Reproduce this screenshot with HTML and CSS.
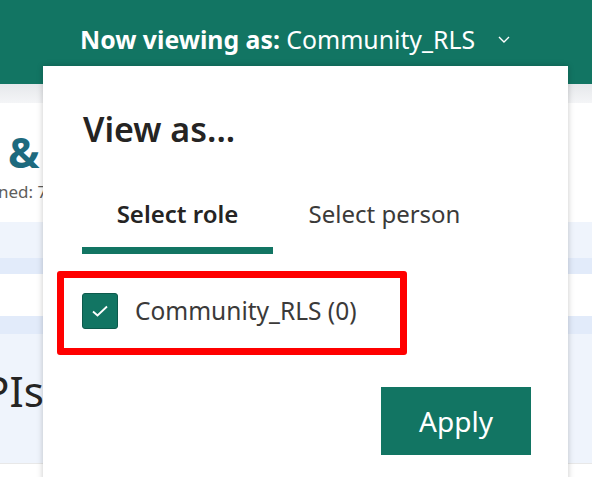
FILE: index.html
```html
<!DOCTYPE html>
<html>
<head>
<meta charset="utf-8">
<link rel="stylesheet" href="styles.css">
</head>
<body>
<div class="page">
  <header class="topbar">
    <span class="viewing"><b>Now viewing as:</b> Community_RLS</span>
    <svg class="chev" width="14" height="10" viewBox="0 0 14 10"><path d="M2 3 L7 8 L12 3" fill="none" stroke="#ffffff" stroke-width="1.4"/></svg>
  </header>
  <div class="subbar"></div>
  <section class="intro">
    <div class="title">&amp;</div>
    <div class="meta">ned: 7</div>
  </section>
  <div class="band light h36"></div>
  <div class="band dark h16"></div>
  <div class="band white h42"></div>
  <div class="band dark h18"></div>
  <section class="band light kpi">
    <div class="kpi-title">KPIs</div>
  </section>
</div>

<div class="panel">
  <h1 class="panel-title">View as...</h1>
  <div class="tabs">
    <div class="tab active">Select role</div>
    <div class="tab">Select person</div>
  </div>
  <div class="highlight">
    <label class="role">
      <span class="check">
        <svg width="20" height="16" viewBox="0 0 20 16"><path d="M3 8.5 L7.5 12.5 L17 3.5" fill="none" stroke="#ffffff" stroke-width="1.8"/></svg>
      </span>
      <span class="role-name">Community_RLS (0)</span>
    </label>
  </div>
  <div class="actions">
    <button class="apply">Apply</button>
  </div>
</div>
</body>
</html>
```

FILE: styles.css
```css
html, body {
  margin: 0;
  padding: 0;
}
body {
  width: 592px;
  height: 477px;
  overflow: hidden;
  position: relative;
  background: #ffffff;
  font-family: "Segoe UI", "Noto Sans", "Open Sans", sans-serif;
}
.page {
  display: flex;
  flex-direction: column;
}
.topbar {
  height: 84px;
  background: #127563;
  display: flex;
  align-items: flex-start;
  padding: 22px 0 0 80px;
  box-sizing: border-box;
  color: #ffffff;
}
.viewing {
  font-size: 24.8px;
  line-height: 34px;
  white-space: nowrap;
}
.viewing b {
  font-weight: 700;
}
.chev {
  margin: 12px 0 0 22px;
}
.subbar {
  height: 19px;
  background: linear-gradient(#e6e8eb, #f4f5f7);
}
.intro {
  height: 119px;
  padding-top: 27px;
  box-sizing: border-box;
}
.title {
  font-size: 42px;
  font-weight: 700;
  color: #1d6a7e;
  line-height: 44px;
  margin-left: 8px;
}
.meta {
  font-size: 17px;
  color: #605e5c;
  line-height: 22px;
  margin-top: 7px;
  margin-left: -2px;
  white-space: nowrap;
}
.band.light { background: #eff4fc; }
.band.dark { background: #e2ebfa; }
.band.white { background: #ffffff; }
.h36 { height: 36px; }
.h16 { height: 16px; }
.h42 { height: 42px; }
.h18 { height: 18px; }
.kpi {
  height: 130px;
  padding-top: 32px;
  box-sizing: border-box;
  border-bottom: 1px solid #e8e8e8;
}
.kpi-title {
  font-size: 42px;
  line-height: 50px;
  color: #252423;
  margin-left: -42px;
  white-space: nowrap;
}

.panel {
  position: absolute;
  left: 43px;
  top: 66px;
  width: 525px;
  height: 430px;
  background: #ffffff;
  box-shadow: 0 0 6px rgba(0, 0, 0, 0.22);
  padding: 41px 0 0 40px;
  box-sizing: border-box;
}
.panel-title {
  margin: 0;
  font-size: 34px;
  font-weight: 600;
  line-height: 44px;
  color: #252423;
}
.tabs {
  display: flex;
  gap: 16px;
  margin-top: 47px;
  margin-left: -1px;
}
.tab {
  width: 191px;
  text-align: center;
  font-size: 24px;
  line-height: 32px;
  color: #3b3a39;
  padding-bottom: 17px;
  border-bottom: 7px solid transparent;
  white-space: nowrap;
}
.tab.active {
  font-weight: 600;
  color: #252423;
  border-bottom-color: #127563;
}
.highlight {
  margin: 17px 0 0 -26px;
  width: 350px;
  height: 84px;
  border: 7px solid #ff0000;
  border-radius: 3px;
  box-sizing: border-box;
  display: flex;
  align-items: center;
  padding-left: 18px;
  padding-bottom: 4px;
}
.role {
  display: flex;
  align-items: center;
  gap: 17px;
}
.check {
  width: 36px;
  height: 36px;
  background: #127563;
  border: 1px solid #0d5a4c;
  border-radius: 3px;
  box-sizing: border-box;
  display: flex;
  align-items: center;
  justify-content: center;
}
.role-name {
  font-size: 24.5px;
  color: #3b3a39;
  line-height: 32px;
  white-space: nowrap;
}
.actions {
  display: flex;
  justify-content: flex-end;
  margin-top: 32px;
  padding-right: 37px;
}
.apply {
  width: 150px;
  height: 68px;
  background: #127563;
  color: #ffffff;
  border: none;
  border-radius: 0;
  font-family: inherit;
  font-size: 28px;
  padding: 0;
}
```
